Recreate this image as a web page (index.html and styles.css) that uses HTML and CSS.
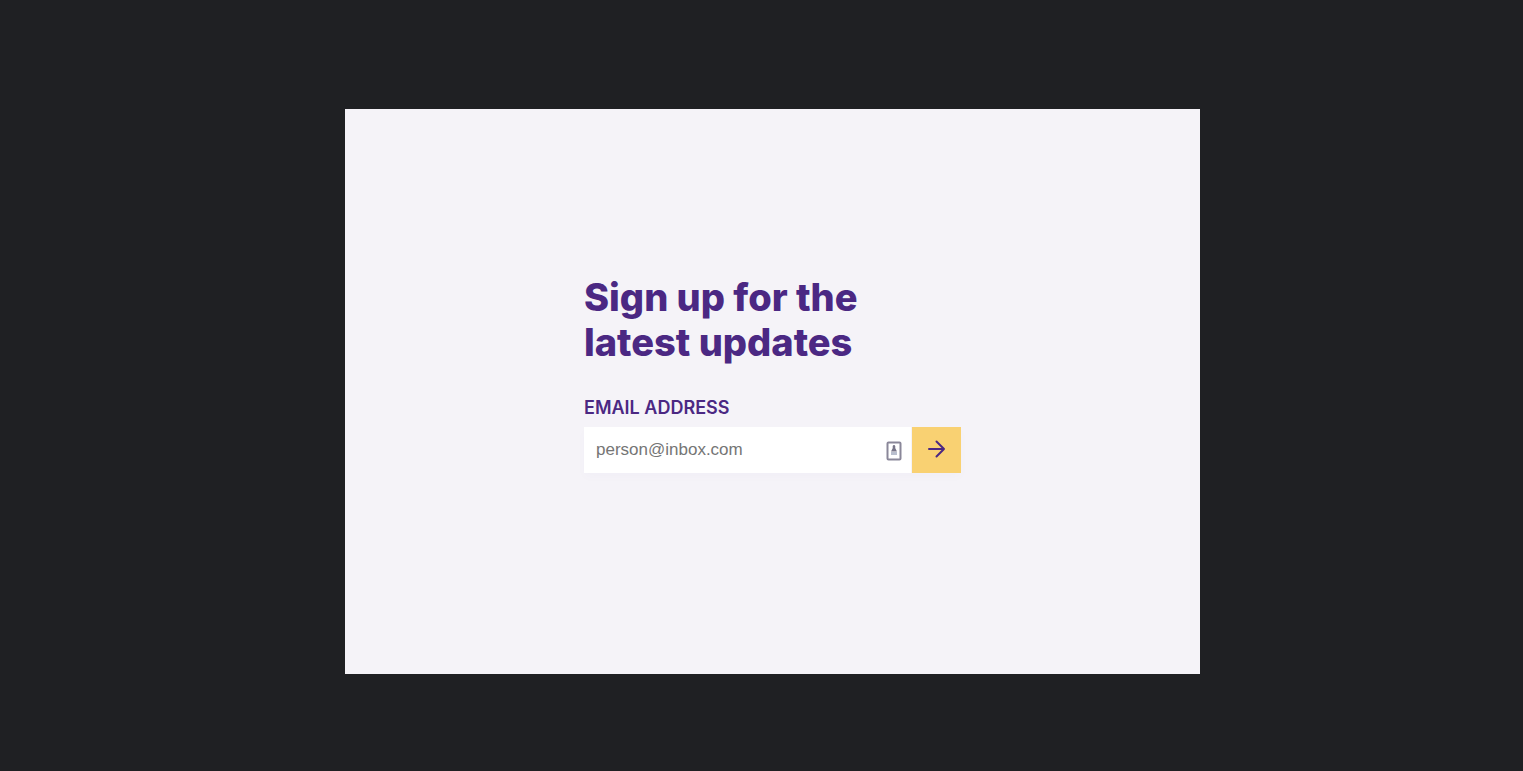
FILE: index.html
```html
<!DOCTYPE html>
<html lang="en">
<head>
  <meta charset="utf-8">
  <meta name="viewport" content="width=device-width, initial-scale=1">
  <title>Sign up</title>
  <link rel="stylesheet" href="styles.css">
</head>
<body class="page">
  <main class="panel">
    <form class="signup">
      <h1 class="signup-title">Sign up for the<br>latest updates</h1>
      <label class="signup-label" for="email">Email address</label>
      <div class="signup-row">
        <div class="field">
          <input class="field-input" id="email" type="email" placeholder="person@inbox.com">
          <svg class="field-icon" viewBox="0 0 16 20" aria-hidden="true">
            <rect x="1.5" y="1.5" width="13" height="17" rx="1" fill="#fff" stroke="#8a8799" stroke-width="2"/>
            <path d="M8 4C6.6 4 6.5 5.5 6.8 7L5 10.500H11L9.200 7C9.500 5.500 9.400 4 8 4Z" fill="#777588"/>
            <path d="M5 11H11V14H5Z" fill="#b9bfce"/>
          </svg>
        </div>
        <button class="submit" type="submit" aria-label="Sign up">
          <svg class="submit-icon" viewBox="0 0 18 18" aria-hidden="true">
            <path d="M1 9H16M8.500 1.500L16 9L8.500 16.500" fill="none" stroke="#4b2883" stroke-width="2" stroke-linecap="round" stroke-linejoin="round"/>
          </svg>
        </button>
      </div>
    </form>
  </main>
</body>
</html>
```
FILE: styles.css
```css
* {
  box-sizing: border-box;
}

.page {
  display: flex;
  min-height: 100vh;
  margin: 0;
  padding: 109px 323px 97px 345px;
  background: #1f2023;
  color: #4b2883;
  font-family: Inter, "Liberation Sans", sans-serif;
}

.panel {
  display: flex;
  flex: 1;
  align-items: center;
  justify-content: center;
  padding-bottom: 35px;
  background: #f5f3f8;
}

.signup {
  width: 100%;
  max-width: 377px;
}

.signup-title {
  margin: 0 0 32px;
  font-size: 38px;
  font-weight: 850;
  line-height: 45px;
}

.signup-label {
  display: block;
  margin-bottom: 8px;
  font-size: 18px;
  font-weight: 600;
  line-height: 22px;
  text-transform: uppercase;
}

.signup-row {
  display: flex;
  gap: 1px;
  height: 46px;
  box-shadow: 0 4px 10px rgba(75, 40, 131, 0.02);
}

.field {
  position: relative;
  flex: 1;
}

.field-input {
  width: 100%;
  height: 100%;
  padding: 0 40px 0 12px;
  border: 0;
  border-radius: 0;
  background: #fff;
  color: #4b2883;
  font-family: "Liberation Sans", Arial, sans-serif;
  font-size: 17px;
}

.field-input::placeholder {
  color: #757575;
}

.field-icon {
  position: absolute;
  top: 14px;
  right: 9px;
  width: 16px;
  height: 20px;
}

.submit {
  display: flex;
  align-items: center;
  justify-content: center;
  width: 49px;
  padding: 0 0 2px;
  border: 0;
  background: #f9d172;
}

.submit-icon {
  width: 18px;
  height: 18px;
}
```
